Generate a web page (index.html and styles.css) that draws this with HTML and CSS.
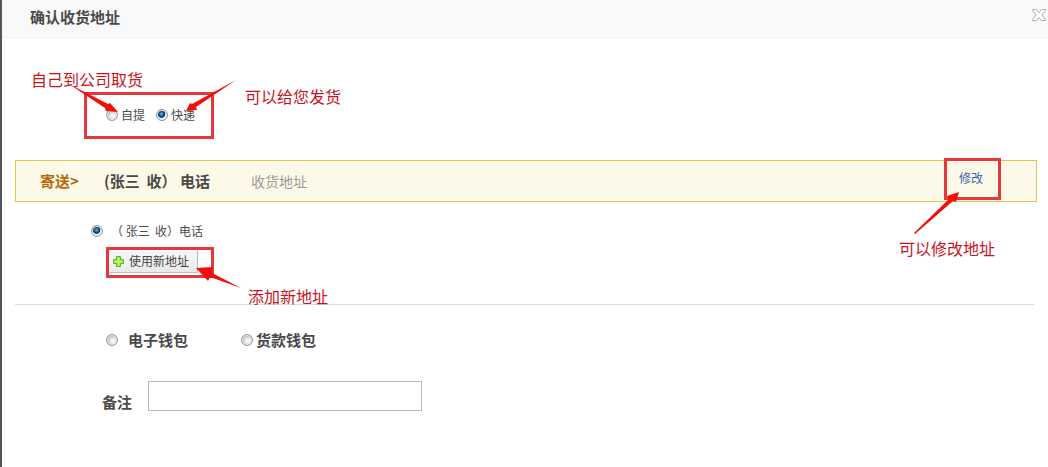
FILE: index.html
```html
<!DOCTYPE html>
<html lang="zh-CN">

<head>
    <meta charset="UTF-8" />
    <meta name="viewport" content="width=device-width, initial-scale=1.0" />
    <title>确认收货地址</title>
    <link rel="stylesheet" href="styles.css">
</head>

<body>
    <div class="dialog">
        <div class="dialog-header">
            <h1>确认收货地址</h1>
            <button class="close-btn" type="button" aria-label="关闭">
                <svg width="14" height="12" viewBox="0 0 14 12">
                    <path d="M.5.5h4L7 3.5 9.500.5h4v1L10 6l3.500 4.500v1h-4L7 8.500l-2.500 3h-4v-1L4 6 .5 1.500z" fill="#fff" stroke="#aaa" />
                </svg>
            </button>
        </div>

        <form class="dialog-body">
            <!-- Delivery method -->
            <div class="delivery">
                <div class="delivery-options marked">
                    <label><input type="radio" name="delivery" value="pickup" />自提</label>
                    <label><input type="radio" name="delivery" value="express" checked />快递</label>
                </div>
                <span class="note note-pickup">自己到公司取货</span>
                <svg class="arrow arrow-pickup" width="54" height="33" viewBox="0 0 54 33">
                    <path d="M2 1L41 21 43 20 51 29 39 28 38 25z" />
                </svg>
                <span class="note note-express">可以给您发货</span>
                <svg class="arrow arrow-express" width="52" height="34" viewBox="0 0 52 34">
                    <path d="M51 0L11 27 12 30 1 31 5 23 7 24z" />
                </svg>
            </div>

            <!-- Selected address -->
            <div class="send-bar">
                <span class="send-title">寄送&gt;</span>
                <span class="send-name">(张三&nbsp; 收） 电话</span>
                <span class="send-address">收货地址</span>
                <a href="#" class="edit-link marked">修改</a>
                <svg class="arrow arrow-edit" width="46" height="43" viewBox="0 0 46 43">
                    <path d="M1 41L36 7 34 4 46 0 43 10 40 9 2 42z" />
                </svg>
                <span class="note note-edit">可以修改地址</span>
            </div>

            <!-- Address list -->
            <div class="address-list">
                <label class="address"><input type="radio" name="address" checked />（ 张三&nbsp; 收）电话</label>
                <div class="new-address marked">
                    <button class="new-btn" type="button">
                        <svg width="11" height="11" viewBox="0 0 11 11">
                            <path d="M3.500.5h4v3h3v4h-3v3h-4v-3h-3v-4h3z" fill="#a4e84e" stroke="#62b31e" />
                            <path d="M5.500 2v7M2 5.500h7" stroke="#c8f58c" />
                        </svg>
                        使用新地址
                    </button>
                </div>
                <svg class="arrow arrow-new" width="46" height="24" viewBox="0 0 46 24">
                    <path d="M0 1L17 0 16 6 45 21 14 10 12 14z" />
                </svg>
                <span class="note note-new">添加新地址</span>
            </div>

            <!-- Payment -->
            <div class="wallets">
                <label class="wallet-cash"><input type="radio" name="wallet" value="cash" />电子钱包</label>
                <label class="wallet-goods"><input type="radio" name="wallet" value="goods" />货款钱包</label>
            </div>

            <div class="remark">
                <label for="remark">备注</label>
                <input type="text" id="remark" class="remark-input" />
            </div>
        </form>
    </div>
</body>

</html>
```
FILE: styles.css
```css
* {
    box-sizing: border-box;
}

body {
    margin: 0;
    background-color: #fff;
    color: #4a4a4a;
    font-family: "Noto Sans CJK SC", sans-serif;
    font-size: 12px;
    line-height: 18px;
}

.dialog {
    min-height: 100vh;
    border-left: 2px solid #555;
}

.dialog-header {
    display: flex;
    justify-content: space-between;
    align-items: flex-start;
    height: 38px;
    padding: 8px 2px 0 28px;
    background-color: #f9f9f9;
    border-bottom: 1px solid #eee;
}

.dialog-header h1 {
    margin: 0;
    font-size: 15px;
    line-height: 18px;
}

.close-btn {
    display: flex;
    padding: 1px 0;
    border: none;
    background: none;
    cursor: pointer;
}

.dialog-body {
    padding: 54px 11px 20px 13px;
}

label {
    display: flex;
    align-items: center;
}

input[type="radio"] {
    appearance: none;
    flex: none;
    width: 12px;
    height: 12px;
    margin: 0 3px 0 0;
    border: 1px solid #999;
    border-radius: 50%;
    background: radial-gradient(circle at 60% 60%, #f4f4f4 20%, #bbb 65%);
    box-shadow: inset 0 0 0 1px #eee;
}

input[type="radio"]:checked {
    border-color: #7f97ab;
    background: radial-gradient(circle at 45% 40%, #6bb8dc 0, #123f66 34%, #123f66 42%, #e8f0f5 52%);
}

/* Help marks */
.marked {
    border: 3px solid #e4393c;
}

.note {
    position: absolute;
    color: #c7141e;
    font-size: 16px;
    line-height: 20px;
    white-space: nowrap;
}

.arrow {
    position: absolute;
    fill: #f30d0d;
    pointer-events: none;
}

/* Delivery */
.delivery {
    position: relative;
}

.delivery-options {
    display: flex;
    gap: 11px;
    width: 130px;
    margin-left: 69px;
    padding: 11px 0 12px 19px;
}

.note-pickup {
    top: -23px;
    left: 16px;
}

.arrow-pickup {
    top: -9px;
    left: 52px;
}

.note-express {
    top: -6px;
    left: 230px;
}

.arrow-express {
    top: -12px;
    left: 170px;
}

/* Selected address */
.send-bar {
    position: relative;
    display: flex;
    align-items: center;
    height: 42px;
    margin-top: 21px;
    padding-left: 24px;
    background-color: #fdf9e8;
    border: 1px solid #dfc84c;
}

.send-title,
.send-name {
    font-size: 15px;
    font-weight: bold;
}

.send-title {
    width: 64px;
    color: #b46a0a;
}

.send-name {
    width: 147px;
}

.send-address {
    color: #999;
    font-size: 14px;
}

.edit-link {
    position: absolute;
    top: -3px;
    right: 35px;
    padding: 8px 15px 10px 12px;
    color: #36a;
    text-decoration: none;
}

.arrow-edit {
    top: 31px;
    right: 77px;
}

.note-edit {
    top: 77px;
    right: 41px;
}

/* Address list */
.address-list {
    position: relative;
    height: 103px;
    margin-right: 2px;
    padding-top: 20px;
    border-bottom: 1px solid #ddd;
}

.address {
    margin-left: 76px;
}

.address input[type="radio"] {
    margin-right: 8px;
}

.new-address {
    width: 108px;
    margin: 7px 0 0 91px;
    padding-bottom: 2px;
}

.new-btn {
    display: flex;
    align-items: center;
    gap: 5px;
    height: 23px;
    padding: 0 8px 0 4px;
    border: solid #bbb;
    border-width: 0 1px 1px 0;
    background: linear-gradient(#fafafa, #e9e9e9);
    color: #444;
    font: inherit;
    white-space: nowrap;
    cursor: pointer;
}

.arrow-new {
    top: 65px;
    left: 181px;
}

.note-new {
    top: 84px;
    left: 233px;
}

/* Payment */
.wallets {
    display: flex;
    margin: 25px 0 0 91px;
    font-size: 15px;
    font-weight: bold;
    line-height: 20px;
}

.wallet-cash {
    width: 135px;
}

.wallet-cash input[type="radio"] {
    margin-right: 10px;
}

.remark {
    display: flex;
    align-items: flex-end;
    gap: 16px;
    margin: 31px 0 0 87px;
}

.remark label {
    font-size: 15px;
    font-weight: bold;
    line-height: 18px;
}

.remark-input {
    width: 274px;
    height: 30px;
    padding: 0 6px;
    border: 1px solid #bbb;
    font: inherit;
}
```
